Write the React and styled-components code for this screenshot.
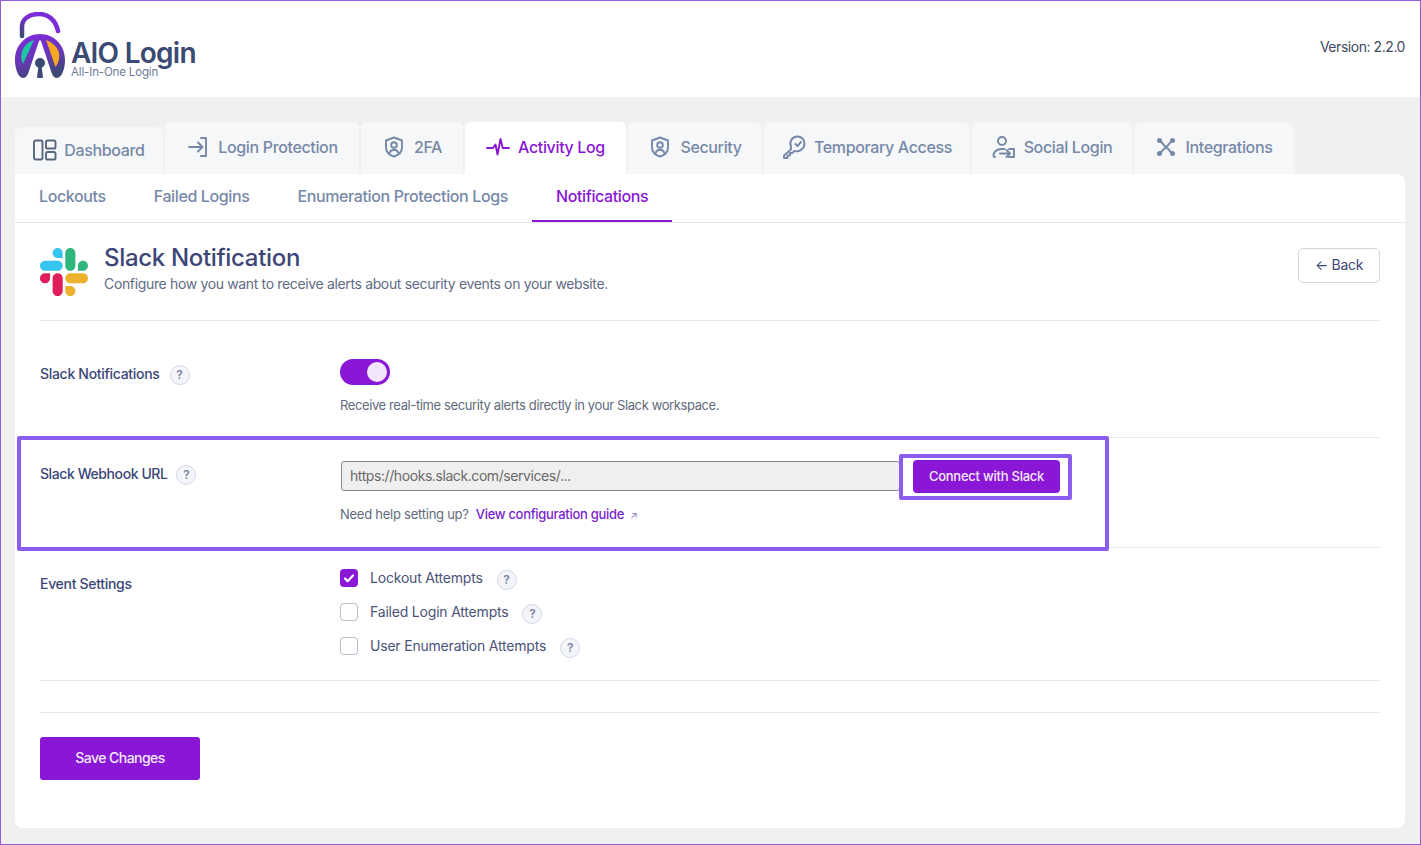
import React from "react";
import styled, { createGlobalStyle } from "styled-components";

const GlobalStyle = createGlobalStyle`
  * { box-sizing: border-box; }
  body {
    margin: 0;
    font-family: "Inter", "Liberation Sans", sans-serif;
    color: #3c4677;
  }
`;

const Frame = styled.div`
  width: 1421px;
  height: 845px;
  border: 1px solid #8f5fd8;
  background: #f0f0f1;
  overflow: hidden;
`;

const Header = styled.header`
  height: 96px;
  background: #fff;
  display: flex;
  justify-content: space-between;
  padding: 11px 15px 0 14px;
`;

const Brand = styled.div`
  display: flex;
  align-items: flex-start;
  gap: 4px;
`;

const BrandText = styled.div`
  padding-top: 24px;
  display: flex;
  flex-direction: column;
`;

const BrandName = styled.span`
  font-size: 28px;
  font-weight: 600;
  letter-spacing: -0.75px;
  line-height: 34px;
  color: #3a4a72;
`;

const BrandSub = styled.span`
  font-size: 11.5px;
  letter-spacing: -0.15px;
  line-height: 12px;
  margin-top: -4px;
  color: #6d7a9c;
`;

const Version = styled.div`
  font-size: 14px;
  letter-spacing: -0.45px;
  color: #3f4a5f;
  padding-top: 26px;
`;

const Main = styled.main`
  padding: 25px 15px 16px 14px;
`;

const TabBar = styled.nav`
  display: flex;
  gap: 2px;
  height: 52px;
  align-items: flex-end;
`;

const Tab = styled.div`
  width: ${(p) => p.$w}px;
  height: ${(p) => (p.$low ? "47px" : "52px")};
  display: flex;
  align-items: center;
  justify-content: center;
  gap: ${(p) => p.$gap || 8}px;
  background: ${(p) => (p.$active ? "#fff" : "#f6f7f8")};
  color: ${(p) => (p.$active ? "#8a16d6" : "#7688a8")};
  border-radius: 6px 6px 0 0;
  font-size: 16px;
  font-weight: 500;
  letter-spacing: -0.35px;
  padding-bottom: 2px;
`;

const Card = styled.section`
  height: 654px;
  background: #fff;
  border-radius: 0 8px 8px 8px;
`;

const SubTabs = styled.div`
  height: 49px;
  display: flex;
  border-bottom: 1px solid #e4e5e8;
`;

const SubTab = styled.div`
  height: 48px;
  padding: 0 24px 2px;
  display: flex;
  align-items: center;
  font-size: 16px;
  font-weight: 500;
  letter-spacing: -0.38px;
  color: ${(p) => (p.$active ? "#8a16d6" : "#7688a8")};
  border-bottom: 2px solid ${(p) => (p.$active ? "#8a16d6" : "transparent")};
`;

const Body = styled.div`
  padding: 0 25px;
`;

const PageHead = styled.div`
  height: 98px;
  padding-top: 25px;
  display: flex;
  align-items: flex-start;
  gap: 16px;
  border-bottom: 1px solid #e8e9ec;
`;

const PageTitleBlock = styled.div`
  flex: 1;
`;

const PageTitle = styled.h1`
  margin: 0;
  font-size: 24px;
  line-height: 20px;
  font-weight: 500;
  letter-spacing: -0.32px;
  color: #3c4677;
`;

const PageDesc = styled.p`
  margin: 6px 0 0;
  font-size: 14px;
  line-height: 20px;
  letter-spacing: -0.35px;
  color: #5f6b85;
`;

const BackButton = styled.button`
  width: 82px;
  height: 35px;
  padding: 0 0 2px;
  background: #fff;
  border: 1px solid #d3d5da;
  border-radius: 5px;
  color: #3c4677;
  font-family: inherit;
  font-size: 14px;
  letter-spacing: -0.3px;
`;

const Row = styled.div`
  position: relative;
  display: grid;
  grid-template-columns: 300px 1fr;
  height: ${(p) => p.$h}px;
  padding-top: ${(p) => p.$pt}px;
  border-bottom: 1px solid #e8e9ec;
`;

const LabelWrap = styled.div`
  display: flex;
  align-items: center;
  align-self: start;
  gap: ${(p) => p.$gap || 10}px;
  height: 20px;
  margin-top: ${(p) => p.$mt}px;
`;

const Label = styled.span`
  font-size: 14px;
  font-weight: 500;
  letter-spacing: ${(p) => p.$ls || -0.3}px;
  color: #3c4677;
`;

const Help = styled.span`
  width: 20px;
  height: 20px;
  flex: none;
  border-radius: 50%;
  border: 1px solid #d3d9e8;
  background: #f3f5fa;
  color: #76839f;
  font-size: 12px;
  font-weight: 600;
  display: flex;
  align-items: center;
  justify-content: center;
  margin-top: 3px;
`;

const Toggle = styled.div`
  width: 50px;
  height: 26px;
  border-radius: 13px;
  background: #8a16d6;
  display: flex;
  align-items: center;
  justify-content: flex-end;
  padding-right: 3px;
`;

const Knob = styled.span`
  width: 20px;
  height: 20px;
  border-radius: 50%;
  background: #f3e6fb;
`;

const Hint = styled.p`
  margin: ${(p) => p.$mt}px 0 0;
  font-size: 13px;
  line-height: 18px;
  letter-spacing: ${(p) => p.$ls}px;
  color: #5f6b7d;
`;

const Highlight = styled.div`
  position: absolute;
  left: -23px;
  top: -2px;
  width: 1092px;
  height: 115px;
  border: 4px solid #8b5cf0;
  border-radius: 2px;
  pointer-events: none;
`;

const InputLine = styled.div`
  display: flex;
  align-items: center;
`;

const Input = styled.div`
  width: 559px;
  height: 30px;
  margin: -3px -1px 0 1px;
  padding-left: 8px;
  display: flex;
  align-items: center;
  background: #efefef;
  border: 1px solid #8a8a8a;
  border-radius: 3px;
  font-size: 14px;
  letter-spacing: -0.42px;
  color: #6a6a6a;
`;

const ConnectFrame = styled.div`
  border: 4px solid #8b5cf0;
  border-radius: 2px;
  padding: 2px 8px 3px 10px;
  display: flex;
`;

const ConnectButton = styled.button`
  width: 147px;
  height: 33px;
  padding: 0 0 1px;
  background: #8a16d6;
  border: none;
  border-radius: 4px;
  color: #f4eafc;
  font-family: inherit;
  font-size: 13px;
  font-weight: 500;
  letter-spacing: -0.25px;
`;

const GuideLink = styled.span`
  color: #7a1fd1;
  margin-left: 7px;
  font-weight: 500;
  letter-spacing: -0.3px;
`;

const LinkArrow = styled.span`
  color: #8f7bc7;
  font-size: 10px;
  margin-left: 6px;
`;

const CheckList = styled.div`
  display: flex;
  flex-direction: column;
  gap: 14px;
`;

const CheckRow = styled.div`
  display: flex;
  align-items: center;
  height: 20px;
`;

const Box = styled.span`
  width: 18px;
  height: 18px;
  flex: none;
  border-radius: 4px;
  border: ${(p) => (p.$on ? "none" : "1px solid #b9bfcb")};
  background: ${(p) => (p.$on ? "#8a16d6" : "#fff")};
  display: flex;
  align-items: center;
  justify-content: center;
  margin-right: 12px;
`;

const CheckText = styled.span`
  font-size: 14px;
  letter-spacing: -0.2px;
  color: #4a5379;
  margin-right: 14px;
  padding-bottom: 2px;
`;

const Spacer = styled.div`
  height: 32px;
  border-bottom: 1px solid #e8e9ec;
`;

const Footer = styled.div`
  padding-top: 24px;
`;

const SaveButton = styled.button`
  width: 160px;
  height: 43px;
  padding: 0 0 2px;
  background: #8a16d6;
  border: none;
  border-radius: 3px;
  color: #f4eafc;
  font-family: inherit;
  font-size: 14px;
  font-weight: 500;
  letter-spacing: -0.55px;
`;

const Icon = ({ children, size = 24 }) => (
  <svg width={size} height={size} viewBox="0 0 24 24" fill="none" stroke="currentColor" strokeWidth="1.9" strokeLinecap="round" strokeLinejoin="round">
    {children}
  </svg>
);

const DashIcon = () => (
  <svg width="24" height="22" viewBox="0 0 24 22" fill="none" stroke="#586680" strokeWidth="1.9">
    <rect x="1" y="1.5" width="8.5" height="19" rx="1.8" />
    <rect x="13" y="1.5" width="9.5" height="8" rx="1.6" />
    <rect x="13" y="13" width="9.5" height="7.5" rx="1.6" />
  </svg>
);

const LoginIcon = () => (
  <Icon>
    <path d="M3 12h13M12 7.500l4.500 4.500-4.500 4.500M15 3h5v18h-5" />
  </Icon>
);

const ShieldIcon = () => (
  <Icon>
    <path d="M12 2.500l8 3v6.500c0 5-3.400 8.200-8 9.500-4.600-1.300-8-4.500-8-9.500V5.500z" />
    <circle cx="12" cy="10" r="2.800" />
    <path d="M7.500 18c.8-2.300 2.500-3.300 4.500-3.300s3.700 1 4.500 3.300" />
  </Icon>
);

const PulseIcon = () => (
  <Icon>
    <path d="M1 13h6l2.500-3.500 2 10L14.500 4l2.200 9H23" />
  </Icon>
);

const KeyIcon = () => (
  <Icon>
    <path d="M9 14.500L2 20.500V23h3.500v-2.500H8V18h2.500l1.500-2c5 1.500 10.500-2 10.500-7.500 0-4-3-7-7-7C10 1.500 7 7 9 11.500z" />
    <path d="M13.500 9l2 2 3.500-4" />
  </Icon>
);

const SocialIcon = () => (
  <Icon>
    <circle cx="10" cy="6" r="4" />
    <path d="M3 22c-1 0-1.500-.8-1.500-1.500 0-3.500 3-6.500 8-6.500h3M8 18.500h9.500M14.500 15l3.500 3.500-3.500 3.500M17 14h5v8h-5" />
  </Icon>
);

const IntegrationsIcon = () => (
  <svg width="20" height="20" viewBox="0 0 20 20" fill="none" stroke="currentColor" strokeWidth="2">
    <path d="M3 3c3 1.500 4 5 7 7s4 5.500 7 7M17 3c-3 1.500-4 5-7 7s-4 5.500-7 7" />
    <circle cx="3.500" cy="3.500" r="2.500" fill="currentColor" stroke="none" />
    <circle cx="16.500" cy="3.500" r="2.500" fill="currentColor" stroke="none" />
    <circle cx="3.500" cy="16.500" r="2.500" fill="currentColor" stroke="none" />
    <circle cx="16.500" cy="16.500" r="2.500" fill="currentColor" stroke="none" />
  </svg>
);

const BrandLogo = () => (
  <svg width="52" height="68" viewBox="1 0 52 68">
    <defs>
      <linearGradient id="brandBody" x1="0.2" y1="0" x2="0.5" y2="1">
        <stop offset="0" stopColor="#7c2bd8" />
        <stop offset="0.55" stopColor="#6a35b8" />
        <stop offset="1" stopColor="#3a4a72" />
      </linearGradient>
      <linearGradient id="brandShackle" x1="0" y1="1" x2="1" y2="0">
        <stop offset="0" stopColor="#3a4a72" />
        <stop offset="0.5" stopColor="#7c2bd8" />
      </linearGradient>
    </defs>
    <path d="M8 24V15C8 7 15 2 25 2C35 2 42 9 44 19" fill="none" stroke="url(#brandShackle)" strokeWidth="4.500" strokeLinecap="round" />
    <path d="M1 48C1 33 12 22 26 22C40 22 51 33 51 48C51 56 48 66 43 66C39 66 37.500 61 36 56L27 29C26.500 28 25.500 28 25 29L16 56C14.500 61 13 66 9 66C4 66 1 56 1 48Z" fill="url(#brandBody)" />
    <path d="M20 28L9 52C4 42 10 31 20 28Z" fill="#1cc6a0" />
    <path d="M32 28C40 31 47 38 45 47C44.500 50 43 53 41.500 55Z" fill="#f6a821" />
    <circle cx="26" cy="51" r="5" fill="#3a4a72" />
    <path d="M24.500 53h3l1.500 13h-6z" fill="#3a4a72" />
  </svg>
);

const SlackLogo = () => (
  <svg width="48" height="48" viewBox="0 0 122.800 122.800">
    <path fill="#E01E5A" d="M25.800 77.600c0 7.100-5.800 12.900-12.900 12.900S0 84.700 0 77.600s5.800-12.900 12.900-12.900h12.900v12.900zM32.300 77.600c0-7.100 5.800-12.900 12.900-12.900s12.900 5.800 12.900 12.900v32.300c0 7.100-5.800 12.900-12.900 12.900s-12.900-5.800-12.900-12.900V77.600z" />
    <path fill="#36C5F0" d="M45.200 25.800c-7.100 0-12.900-5.800-12.900-12.900S38.100 0 45.200 0s12.900 5.800 12.900 12.900v12.900H45.200zM45.200 32.300c7.100 0 12.900 5.800 12.900 12.900s-5.800 12.900-12.900 12.900H12.900C5.800 58.100 0 52.300 0 45.200s5.800-12.900 12.900-12.900h32.300z" />
    <path fill="#2EB67D" d="M97 45.200c0-7.100 5.800-12.900 12.900-12.900s12.900 5.800 12.900 12.900-5.800 12.900-12.900 12.900H97V45.200zM90.500 45.200c0 7.100-5.800 12.900-12.900 12.900s-12.900-5.800-12.900-12.900V12.900C64.700 5.800 70.500 0 77.600 0s12.900 5.800 12.900 12.900v32.300z" />
    <path fill="#ECB22E" d="M77.600 97c7.100 0 12.900 5.800 12.900 12.900s-5.800 12.900-12.900 12.900-12.900-5.800-12.900-12.900V97h12.900zM77.600 90.500c-7.100 0-12.900-5.800-12.900-12.900s5.800-12.900 12.900-12.900h32.300c7.100 0 12.900 5.800 12.900 12.900s-5.800 12.900-12.900 12.900H77.600z" />
  </svg>
);

const tabs = [
  { name: "Dashboard", w: 148, low: true, gap: 7, icon: <DashIcon /> },
  { name: "Login Protection", w: 194, icon: <LoginIcon /> },
  { name: "2FA", w: 102, icon: <ShieldIcon /> },
  { name: "Activity Log", w: 161, active: true, icon: <PulseIcon /> },
  { name: "Security", w: 134, icon: <ShieldIcon /> },
  { name: "Temporary Access", w: 206, icon: <KeyIcon /> },
  { name: "Social Login", w: 160, icon: <SocialIcon /> },
  { name: "Integrations", w: 160, gap: 10, icon: <IntegrationsIcon /> },
];

const subTabs = ["Lockouts", "Failed Logins", "Enumeration Protection Logs", "Notifications"];
const events = [
  { name: "Lockout Attempts", on: true },
  { name: "Failed Login Attempts" },
  { name: "User Enumeration Attempts" },
];

export default function App() {
  return (
    <Frame>
      <GlobalStyle />
      <Header>
        <Brand>
          <BrandLogo />
          <BrandText>
            <BrandName>AIO Login</BrandName>
            <BrandSub>All-In-One Login</BrandSub>
          </BrandText>
        </Brand>
        <Version>Version: 2.2.0</Version>
      </Header>
      <Main>
        <TabBar>
          {tabs.map((t) => (
            <Tab key={t.name} $w={t.w} $low={t.low} $gap={t.gap} $active={t.active}>
              {t.icon}
              {t.name}
            </Tab>
          ))}
        </TabBar>
        <Card>
          <SubTabs>
            {subTabs.map((s) => (
              <SubTab key={s} $active={s === "Notifications"}>{s}</SubTab>
            ))}
          </SubTabs>
          <Body>
            <PageHead>
              <SlackLogo />
              <PageTitleBlock>
                <PageTitle>Slack Notification</PageTitle>
                <PageDesc>Configure how you want to receive alerts about security events on your website.</PageDesc>
              </PageTitleBlock>
              <BackButton>← Back</BackButton>
            </PageHead>

            <Row $h={117} $pt={38}>
              <LabelWrap $mt={4}>
                <Label>Slack Notifications</Label>
                <Help>?</Help>
              </LabelWrap>
              <div>
                <Toggle><Knob /></Toggle>
                <Hint $mt={11} $ls={-0.39}>Receive real-time security alerts directly in your Slack workspace.</Hint>
              </div>
            </Row>

            <Row $h={110} $pt={16}>
              <LabelWrap $mt={9} $gap={9}>
                <Label $ls={-0.42}>Slack Webhook URL</Label>
                <Help>?</Help>
              </LabelWrap>
              <div>
                <InputLine>
                  <Input>https://hooks.slack.com/services/...</Input>
                  <ConnectFrame>
                    <ConnectButton>Connect with Slack</ConnectButton>
                  </ConnectFrame>
                </InputLine>
                <Hint $mt={5} $ls={-0.25}>
                  Need help setting up?
                  <GuideLink>View configuration guide</GuideLink>
                  <LinkArrow>↗</LinkArrow>
                </Hint>
              </div>
              <Highlight />
            </Row>

            <Row $h={133} $pt={20}>
              <LabelWrap $mt={5}>
                <Label>Event Settings</Label>
              </LabelWrap>
              <CheckList>
                {events.map((e) => (
                  <CheckRow key={e.name}>
                    <Box $on={e.on}>
                      {e.on && (
                        <svg width="12" height="12" viewBox="0 0 12 12" fill="none" stroke="#fff" strokeWidth="2.200" strokeLinecap="round" strokeLinejoin="round">
                          <path d="M2 6.500l2.700 2.700L10 3.500" />
                        </svg>
                      )}
                    </Box>
                    <CheckText>{e.name}</CheckText>
                    <Help>?</Help>
                  </CheckRow>
                ))}
              </CheckList>
            </Row>

            <Spacer />
            <Footer>
              <SaveButton>Save Changes</SaveButton>
            </Footer>
          </Body>
        </Card>
      </Main>
    </Frame>
  );
}
